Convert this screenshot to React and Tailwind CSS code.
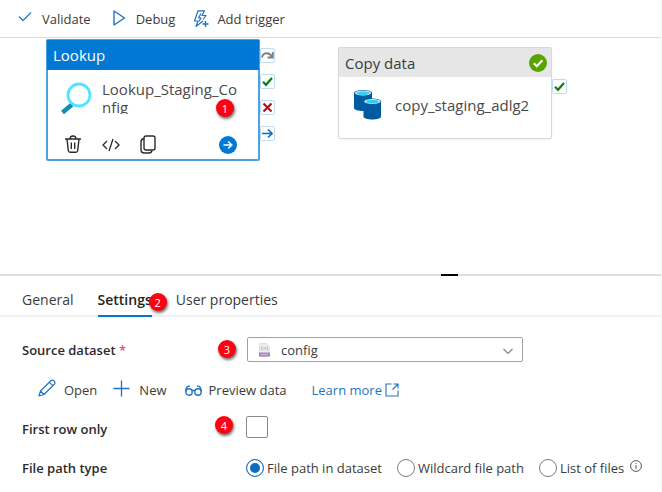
import React, { useState } from 'react';

const Marker = ({ n, className }) => (
  <span className={`absolute flex h-[18px] w-[18px] items-center justify-center rounded-full bg-[#fb0310] text-[11px] leading-none text-white shadow-[1px_2px_3px_rgba(0,0,0,0.6)] ${className}`}>{n}</span>
);

const CheckMark = () => (
  <svg width="11" height="11" viewBox="0 0 11 11" fill="none" stroke="#107c10" strokeWidth="2.2"><path d="M1 5.8 4 8.8 10 2" /></svg>
);

const Handle = ({ label, children }) => (
  <button aria-label={label} className="flex h-[15px] w-[15px] items-center justify-center rounded-xs border border-[#bfdcf5] bg-white">{children}</button>
);

const Toolbar = () => (
  <div className="flex h-[38px] items-center border-b border-[#dcdcdc] pl-[18px]">
    <button className="flex items-center gap-[9px]">
      <svg width="15" height="14" viewBox="0 0 15 14" fill="none" stroke="#2b7bc9" strokeWidth="1.3"><path d="M1 4.5 5 8.500 13 .5" /></svg>
      Validate
    </button>
    <button className="ml-[21px] flex items-center gap-[10px]">
      <svg width="14" height="18" viewBox="0 0 14 18" fill="none" stroke="#2272c3" strokeWidth="1.4" strokeLinejoin="round"><path d="M2 1v14L12.5 8z" /></svg>
      Debug
    </button>
    <button className="ml-[18px] flex items-center gap-2">
      <svg width="16" height="18" viewBox="0 0 16 18" fill="none" stroke="#2272c3" strokeWidth="1.2" strokeLinejoin="round">
        <path d="M10 11 3 16.500l2-5.500H1.500L5 .8h6.500L9 5.500h4L10 9.500" />
        <path d="M8 3.500 5.500 8H8L6 11.500" />
        <path d="M12.500 11v6M9.500 14h6" strokeWidth="1.4" />
      </svg>
      Add trigger
    </button>
  </div>
);

const LookupNode = () => (
  <div className="absolute left-[46px] top-[1px] flex">
    <div className="relative w-[214px] rounded-xs border-2 border-[#4ea1e0] bg-white">
      <div className="-m-px flex h-[30px] items-center bg-[#0078d4] pl-[6px] text-[15px] text-white">Lookup</div>
      <div className="flex items-start gap-[10px] pl-3 pt-[11px]">
        <svg className="mt-[2px]" width="32" height="34" viewBox="0 0 32 34" fill="none">
          <path d="M2.500 30.500 12 22.500" stroke="#198ab3" strokeWidth="4.5" />
          <circle cx="19" cy="13" r="11" stroke="#50e6ff" strokeWidth="2.8" />
        </svg>
        <div className="h-[34px] w-[140px] overflow-hidden text-[15px] leading-[18px] text-[#4a4a4a]">
          Lookup_Staging_Co<br />nfig
        </div>
      </div>
      <div className="flex h-[43px] items-center pl-4 pr-[21px] pt-[14px] text-[#2b2b2b]">
        <button aria-label="Delete">
          <svg width="18" height="19" viewBox="0 0 18 19" fill="none" stroke="currentColor" strokeWidth="1.4">
            <path d="M1 4h16M6 4a3 3 0 0 1 6 0M3 4l1.300 11.500a2 2 0 0 0 2 1.800h5.400a2 2 0 0 0 2-1.800L15 4" />
            <path d="M7.300 7.500v6.500M10.700 7.500v6.500" />
          </svg>
        </button>
        <button aria-label="View code" className="ml-5">
          <svg width="18" height="14" viewBox="0 0 18 14" fill="none" stroke="currentColor" strokeWidth="1.3"><path d="M5 3 1 7l4 4M13 3l4 4-4 4M11 1 7 13" /></svg>
        </button>
        <button aria-label="Clone" className="ml-5">
          <svg width="16" height="19" viewBox="0 0 16 19" fill="none" stroke="currentColor" strokeWidth="1.4"><rect x="4" y="1" width="11" height="14" rx="2" /><path d="M4 3.500Q1 4 1 7v7.500q0 3.500 3.500 3.500H9q2.500 0 3-2.500" /></svg>
        </button>
        <button aria-label="Add output" className="ml-auto">
          <svg width="18" height="18" viewBox="0 0 18 18" fill="none"><circle cx="9" cy="9" r="9" fill="#0078d4" /><path d="M4.500 9h8M9.200 5.500 12.800 9l-3.600 3.500" stroke="#fff" strokeWidth="1.500" /></svg>
        </button>
      </div>
      <Marker n={1} className="right-6 top-[58px]" />
    </div>
    <div className="flex flex-col gap-[11px] pt-[9px]">
      <Handle label="Skipped">
        <svg width="13" height="11" viewBox="0 0 13 11" fill="none" stroke="#808080" strokeWidth="1.900"><path d="M1 7.500C2 2.500 8 1.500 11 7M11.800 2V7.500H6.500" /></svg>
      </Handle>
      <Handle label="Success"><CheckMark /></Handle>
      <Handle label="Failure">
        <svg width="11" height="11" viewBox="0 0 11 11" stroke="#b80f0f" strokeWidth="2.200"><path d="m1.500 1.500 8 8M9.500 1.500l-8 8" /></svg>
      </Handle>
      <Handle label="Completion">
        <svg width="11" height="11" viewBox="0 0 11 11" fill="none" stroke="#0f6cbd" strokeWidth="1.600"><path d="M0 5.500h10M6 1.500l4 4-4 4" /></svg>
      </Handle>
    </div>
  </div>
);

const CopyNode = () => (
  <div className="absolute left-[338px] top-[9px] flex">
    <div className="w-[214px] rounded-xs border border-[#d8d8d8] bg-white shadow-xs">
      <div className="flex h-[29px] items-center justify-between bg-[#e6e6e6] pl-[6px] pr-1 text-[15px]">
        Copy data
        <svg width="18" height="18" viewBox="0 0 18 18" fill="none"><circle cx="9" cy="9" r="9" fill="#57a300" /><path d="m4.800 9.200 3 3 5.600-6" stroke="#fff" strokeWidth="2.200" /></svg>
      </div>
      <div className="flex h-[61px] items-center gap-[13px] pb-[6px] pl-[14px] text-[15px] text-[#4a4a4a]">
        <svg width="29" height="32" viewBox="0 0 29 32">
          <path d="M1 4v15c0 4 18 4 18 0V4c0-4-18-4-18 0z" fill="#005ba1" />
          <ellipse cx="10" cy="4" rx="8" ry="2.500" fill="#e8f4fb" />
          <ellipse cx="10" cy="4.200" rx="6.500" ry="1.900" fill="#32cfee" />
          <path d="M10.500 12.500v15c0 4 17.500 4 17.500 0v-15c0-4-17.500-4-17.500 0z" fill="#005ba1" />
          <ellipse cx="19.300" cy="12.500" rx="8" ry="2.500" fill="#e8f4fb" />
          <ellipse cx="19.300" cy="12.700" rx="6.500" ry="1.900" fill="#32cfee" />
        </svg>
        copy_staging_adlg2
      </div>
    </div>
    <div className="pt-8"><Handle label="Success"><CheckMark /></Handle></div>
  </div>
);

const Tabs = () => (
  <div role="tablist" className="flex h-[41px] items-end border-b-2 border-[#f0f0f0] pl-[22px] text-[14px]">
    <button role="tab" aria-selected="false" className="h-[30px]">General</button>
    <div className="relative ml-6">
      <button role="tab" aria-selected="true" className="-mb-[2px] block h-[32px] border-b-2 border-[#0078d4] font-semibold text-[#242424]">Settings</button>
      <Marker n={2} className="-right-[15px] top-2" />
    </div>
    <button role="tab" aria-selected="false" className="ml-6 h-[30px]">User properties</button>
  </div>
);

const pathTypes = ['File path in dataset', 'Wildcard file path', 'List of files'];

const SettingsForm = () => {
  const [pathType, setPathType] = useState(pathTypes[0]);
  const [firstRow, setFirstRow] = useState(false);

  return (
    <form className="pb-[14px] pl-[22px] pt-5">
      <div className="relative flex items-center">
        <label htmlFor="dataset" className="w-[225px] shrink-0 font-semibold text-[#2b2b2b]">Source dataset <span className="font-normal text-[#d13438]">*</span></label>
        <Marker n={3} className="left-[196px] top-[3px]" />
        <div className="relative w-[276px]">
          <select id="dataset" className="block h-[25px] w-full appearance-none rounded-xs border border-[#a0a0a0] bg-white pl-[33px] leading-5">
            <option>config</option>
          </select>
          <svg className="pointer-events-none absolute left-3 top-[6px]" width="11" height="14" viewBox="0 0 11 14">
            <path d="M.5.5h7l3 3v10h-10z" fill="#eeecea" stroke="#e2dfdc" />
            <path d="M3 3.500Q2 5.500 3 7.500M8 3.500q1 2 0 4M4.500 4.500l2 2M6.500 4.500l-2 2" stroke="#9a94a4" strokeWidth=".7" fill="none" />
            <path d="M0 9.500h11v4H0z" fill="#a884c2" />
            <path d="M2 11.500h7" stroke="#d9c8e6" strokeDasharray="1.500 .5" />
          </svg>
          <svg className="pointer-events-none absolute right-[10px] top-[11px]" width="10" height="7" viewBox="0 0 10 7" fill="none" stroke="#858585" strokeWidth="1.200"><path d="m.5 1 4.500 4.500L9.500 1" /></svg>
        </div>
      </div>

      <div className="mt-4 flex h-6 items-center pl-4">
        <button type="button" className="flex items-center gap-2">
          <svg className="-mt-1" width="18" height="18" viewBox="0 0 18 18" fill="none" stroke="#2272c3" strokeWidth="1.200" strokeLinejoin="round"><path d="m1 17 1.500-5L13 1.500c2-1.500 5 1.500 3.500 3.500L6 15.500zM11.300 3.200l3.500 3.500M2.500 12 6 15.500" /></svg>
          Open
        </button>
        <button type="button" className="ml-4 flex items-center gap-[9px]">
          <svg className="-mt-1" width="17" height="17" viewBox="0 0 17 17" stroke="#2272c3" strokeWidth="1.300"><path d="M8.500.5v16M.5 8.500h16" /></svg>
          New
        </button>
        <button type="button" className="ml-[18px] flex items-center gap-[7px]">
          <svg width="17" height="11" viewBox="0 0 17 11" fill="none" stroke="#2272c3" strokeWidth="1.400"><circle cx="4" cy="7" r="3.200" /><circle cx="13" cy="7" r="3.200" /><path d="M.8 6.500C.8 3 2 1 5 1M16.200 6.500C16.200 3 15 1 12 1M7 5.500h3" /></svg>
          Preview data
        </button>
        <a href="#learn" className="ml-[25px] flex items-center gap-[3px] text-[#1f74c4]">
          Learn more
          <svg width="14" height="14" viewBox="0 0 14 14" fill="none" stroke="currentColor" strokeWidth="1.100"><path d="M6.500 1H1v12h12V7.500M8.500 1H13v4.500M13 1 7.500 6.500" /></svg>
        </a>
      </div>

      <div className="relative mt-[14px] flex h-[22px] items-center">
        <label htmlFor="firstRow" className="w-[224px] shrink-0 pt-1 font-semibold text-[#2b2b2b]">First row only</label>
        <Marker n={4} className="left-[193px] top-0" />
        <input id="firstRow" type="checkbox" checked={firstRow} onChange={(e) => setFirstRow(e.target.checked)} className="h-[22px] w-[22px] appearance-none rounded-xs border border-[#8a8a8a] checked:bg-[#0f6cbd]" />
      </div>

      <fieldset className="mt-5 flex items-center">
        <legend className="float-left w-[224px] shrink-0 font-semibold text-[#2b2b2b]">File path type</legend>
        <div className="flex items-center gap-[15px]">
          {pathTypes.map((type) => (
            <label key={type} className="flex items-center gap-[3px] whitespace-nowrap">
              <input type="radio" name="pathType" checked={pathType === type} onChange={() => setPathType(type)} className="h-[18px] w-[18px] appearance-none rounded-full border border-[#7a7a7a] bg-white checked:border-[#1f74c4] checked:bg-[#0f6cbd] checked:shadow-[inset_0_0_0_3px_white]" />
              {type}
            </label>
          ))}
        </div>
        <svg className="-mt-1 ml-[6px] shrink-0" width="12" height="12" viewBox="0 0 12 12" fill="none" stroke="#555"><circle cx="6" cy="6" r="5.400" /><path d="M6 5v4M6 3v1" /></svg>
      </fieldset>
    </form>
  );
};

const App = () => (
  <div className="border-b border-r border-[#f5f5f5] bg-white font-['Open_Sans',sans-serif] text-[13px] leading-5 text-[#3b3b3b]">
    <Toolbar />
    <div className="relative h-[236px]">
      <LookupNode />
      <CopyNode />
    </div>
    <div className="relative border-t-2 border-[#dedede]">
      <span className="absolute -top-[2px] left-2/3 h-[2px] w-[17px] bg-black" />
    </div>
    <Tabs />
    <SettingsForm />
  </div>
);

export default App;
